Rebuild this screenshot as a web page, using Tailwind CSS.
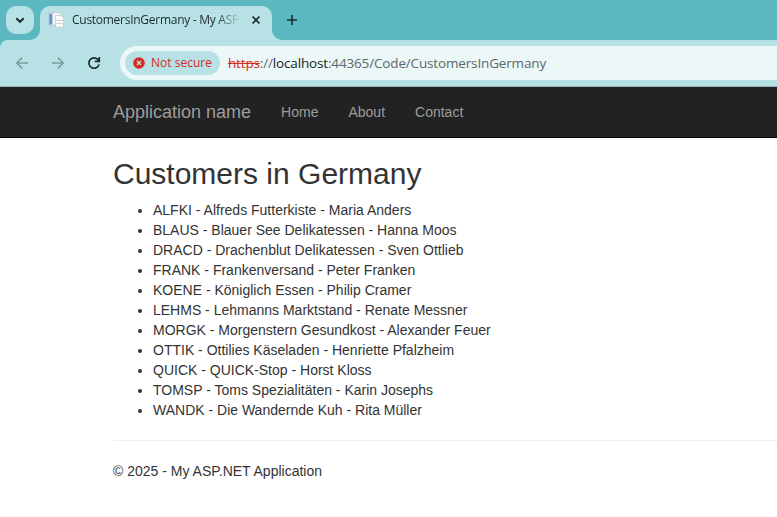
<!DOCTYPE html>
<html lang="en">
<head>
<meta charset="utf-8">
<title>CustomersInGermany - My ASP.NET Application</title>
<script src="https://cdn.jsdelivr.net/npm/@tailwindcss/browser@4"></script>
</head>
<body class="h-[517px] w-[777px] overflow-hidden bg-white font-['Liberation_Sans',Arial,sans-serif] text-sm leading-5 text-[#333]">
<header class="font-['Open_Sans','Noto_Sans',sans-serif]">
  <div class="flex h-10 items-start bg-[#5bb8c1] pl-1.5 pt-1.5">
    <button class="flex h-7 w-7 items-center justify-center rounded-[10px] bg-[#b7e1e4]">
      <svg class="h-7 w-7" viewBox="0 0 28 28" fill="none" stroke="#1c2a2e" stroke-width="1.9"><path d="M10.3 12.2 14 15.8l3.7-3.6"/></svg>
    </button>
    <div class="relative ml-1.5 flex h-[34px] w-[232px] items-center rounded-t-[10px] bg-[#b7e1e4] pb-[6px] pl-2">
      <svg class="absolute -left-[10px] bottom-0 h-[10px] w-[10px]" viewBox="0 0 10 10"><path d="M10 0v10H0A10 10 0 0 0 10 0Z" fill="#b7e1e4"/></svg>
      <svg class="absolute -right-[10px] bottom-0 h-[10px] w-[10px]" viewBox="0 0 10 10"><path d="M0 0v10h10A10 10 0 0 1 0 0Z" fill="#b7e1e4"/></svg>
      <svg class="h-4 w-4 shrink-0" viewBox="0 0 16 16">
        <path d="M.5 .5h6v13.500h-6Z" fill="#e9f3f9" stroke="#b5c6cf" stroke-width=".7"/>
        <path d="M1.200 1.700h3.500v11H1.200Z" fill="#4f9fd8"/>
        <path d="M4.500 .5h6.500l2.500 2.200v10.300h-9Z" fill="#f5f6f7" stroke="#bcc3c7" stroke-width=".7"/>
        <path d="M7.500 3.500h5.500l2.500 2.500V15.300h-8Z" fill="#fafafa" stroke="#bcc3c7" stroke-width=".7"/>
        <path d="M7.500 8.500h8M8.500 11.500h6" stroke="#c5cbcf" stroke-width=".9"/>
      </svg>
      <span class="ml-2 w-[168px] whitespace-nowrap text-[12px] leading-4 tracking-[-0.27px] text-[#1c2a2e] mask-r-from-86% mask-r-to-100%">CustomersInGermany - My ASP.</span>
      <svg class="ml-[7px] h-[18px] w-[18px]" viewBox="0 0 18 18" stroke="#1c2a2e" stroke-width="1.7"><path d="m5.500 5.500 7 7m0-7-7 7"/></svg>
    </div>
    <svg class="ml-[11px] mt-[5px] h-[18px] w-[18px]" viewBox="0 0 18 18" stroke="#1c2a2e" stroke-width="1.6"><path d="M9 4v10M4 9h10"/></svg>
  </div>
  <div class="bg-[#5bb8c1]">
    <div class="flex h-[47px] items-center rounded-tl-lg border-b border-[#93b4b6] bg-[#b7e1e4] pl-3">
      <svg class="h-5 w-5" viewBox="0 0 20 20" fill="none" stroke="#7d999d" stroke-width="1.6"><path d="M16 10H5m5.300-5.500L4.800 10l5.500 5.500"/></svg>
      <svg class="ml-4 h-5 w-5" viewBox="0 0 20 20" fill="none" stroke="#7d999d" stroke-width="1.6"><path d="M4 10h11M9.700 4.500 15.200 10l-5.500 5.500"/></svg>
      <svg class="ml-4 h-5 w-5" viewBox="0 0 20 20" fill="none" stroke="#1c2a2e" stroke-width="1.7"><path d="M15.100 11.400A5.200 5.200 0 1 1 13.800 6.400L15.200 8M15.300 4v4.400h-4.500"/></svg>
      <div class="ml-4 flex h-[34px] flex-1 items-center rounded-l-full bg-[#ecf8f8] pl-[5px]">
        <div class="flex h-6 w-[95px] shrink-0 items-center rounded-full bg-[#b7e1e4] pl-2">
          <svg class="h-3 w-3 shrink-0" viewBox="0 0 12 12"><circle cx="6" cy="6" r="5.800" fill="#d22c23"/><path d="m4 4 4 4m0-4-4 4" stroke="#c6e4e4" stroke-width="1.300"/></svg>
          <span class="ml-1.5 whitespace-nowrap text-[12px] font-medium leading-4 tracking-[0.02px] text-[#d22c23]">Not secure</span>
        </div>
        <div class="ml-2 whitespace-nowrap text-[13.5px] tracking-[-0.155px] text-[#5b6769]"><span class="text-[#d22c23] line-through">https</span>://<span class="text-[#151d20]">localhost</span>:44365/Code/CustomersInGermany</div>
      </div>
    </div>
  </div>
</header>
<nav class="flex h-[51px] items-center border-b border-[#080808] bg-[#222] pl-[113px] text-[#9d9d9d]">
  <a class="whitespace-nowrap text-lg leading-5">Application name</a>
  <a class="ml-[30px]">Home</a>
  <a class="ml-[30px]">About</a>
  <a class="ml-[30px]">Contact</a>
</nav>
<main class="pl-[113px]">
  <h2 class="mt-[19px] mb-[10px] text-[30px] leading-[33px]">Customers in Germany</h2>
  <ul class="list-disc pl-10">
    <li>ALFKI - Alfreds Futterkiste - Maria Anders</li>
    <li>BLAUS - Blauer See Delikatessen - Hanna Moos</li>
    <li>DRACD - Drachenblut Delikatessen - Sven Ottlieb</li>
    <li>FRANK - Frankenversand - Peter Franken</li>
    <li>KOENE - Königlich Essen - Philip Cramer</li>
    <li>LEHMS - Lehmanns Marktstand - Renate Messner</li>
    <li>MORGK - Morgenstern Gesundkost - Alexander Feuer</li>
    <li>OTTIK - Ottilies Käseladen - Henriette Pfalzheim</li>
    <li>QUICK - QUICK-Stop - Horst Kloss</li>
    <li>TOMSP - Toms Spezialitäten - Karin Josephs</li>
    <li>WANDK - Die Wandernde Kuh - Rita Müller</li>
  </ul>
  <hr class="mt-5 mb-5 border-[#eee]">
  <footer>© 2025 - My ASP.NET Application</footer>
</main>
</body>
</html>
